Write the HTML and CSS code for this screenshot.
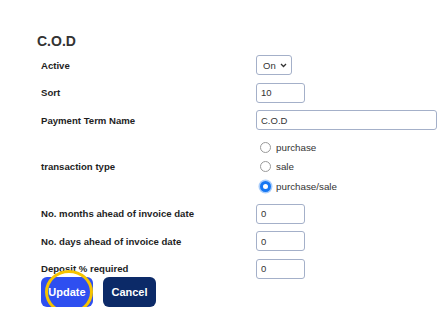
FILE: index.html
```html
<!DOCTYPE html>
<html>
<head>
  <title>C.O.D</title>
  <meta charset="UTF-8">
  <meta name="viewport" content="width=device-width, initial-scale=1.0">
  <link rel="stylesheet" href="styles.css">
</head>
<body>
  <div class="page">
    <h1>C.O.D</h1>
    <form class="term-form">
      <label class="field-label" for="active">Active</label>
      <div class="select-wrap">
        <select id="active" name="active">
          <option>On</option>
          <option>Off</option>
        </select>
        <svg class="chevron" width="7" height="5" viewBox="0 0 7 5"><path d="M1 1l2.5 2.5L6 1" fill="none" stroke="#333" stroke-width="1.3"/></svg>
      </div>

      <label class="field-label" for="sort">Sort</label>
      <div><input class="small" type="text" id="sort" value="10"></div>

      <label class="field-label" for="name">Payment Term Name</label>
      <div><input class="wide" type="text" id="name" value="C.O.D"></div>

      <span class="field-label">transaction type</span>
      <div class="radio-group">
        <label class="radio"><input type="radio" name="ttype"> purchase</label>
        <label class="radio"><input type="radio" name="ttype"> sale</label>
        <label class="radio"><input type="radio" name="ttype" checked> purchase/sale</label>
      </div>

      <label class="field-label" for="months">No. months ahead of invoice date</label>
      <div><input class="small" type="text" id="months" value="0"></div>

      <label class="field-label" for="days">No. days ahead of invoice date</label>
      <div><input class="small" type="text" id="days" value="0"></div>

      <label class="field-label" for="deposit">Deposit % required</label>
      <div><input class="small" type="text" id="deposit" value="0"></div>
    </form>
    <div class="actions">
      <div class="btn-wrap">
        <button class="btn btn-update" type="button">Update</button>
        <span class="focus-ring"></span>
      </div>
      <button class="btn btn-cancel" type="button">Cancel</button>
    </div>
  </div>
</body>
</html>
```

FILE: styles.css
```css
html, body {
  margin: 0;
  background: #fff;
}
body {
  font-family: "Liberation Sans", Arial, sans-serif;
  color: #222;
}
.page {
  padding: 33px 0 0 37px;
}
h1 {
  margin: 0;
  font-size: 14px;
  line-height: 17px;
  font-weight: bold;
  color: #333;
}
.term-form {
  display: grid;
  grid-template-columns: 215px 190px;
  row-gap: 7.5px;
  align-items: center;
  margin-top: 5px;
  padding-left: 4px;
}
.field-label {
  font-size: 9.6px;
  font-weight: bold;
  color: #1e1e1e;
}
input[type=text],
select {
  box-sizing: border-box;
  height: 20px;
  border: 1px solid #a4b0c9;
  border-radius: 3px;
  font-family: inherit;
  font-size: 9.5px;
  color: #333;
  padding: 0 4px;
  background: #fff;
  display: block;
}
input.small {
  width: 49px;
}
input.wide {
  width: 181px;
}
.select-wrap {
  position: relative;
  width: 36px;
}
select {
  -webkit-appearance: none;
  appearance: none;
  width: 36px;
  padding-left: 6px;
}
.chevron {
  position: absolute;
  right: 5px;
  top: 8px;
  pointer-events: none;
}
.radio-group {
  display: flex;
  flex-direction: column;
  padding-left: 4px;
}
.radio {
  display: flex;
  align-items: center;
  height: 19.5px;
  font-size: 9.8px;
  color: #333;
}
.radio input {
  -webkit-appearance: none;
  appearance: none;
  box-sizing: border-box;
  width: 11px;
  height: 11px;
  margin: 0 5px 0 0;
  border: 1px solid #9a9a9a;
  border-radius: 50%;
  background: #fff;
}
.radio input:checked {
  border: 3px solid #1677f3;
  background: #fff;
  box-shadow: 0 0 0 1.5px #a9cdfb;
}
.actions {
  display: flex;
  gap: 10px;
  margin-top: -2px;
  padding-left: 4px;
}
.btn-wrap {
  position: relative;
}
.btn {
  height: 30px;
  border: none;
  border-radius: 6px;
  color: #fff;
  font-family: inherit;
  font-size: 11px;
  font-weight: bold;
  padding: 0;
  display: block;
}
.btn-update {
  width: 52px;
  background: #2e4ff0;
}
.btn-cancel {
  width: 53px;
  background: #0c2a68;
}
.focus-ring {
  position: absolute;
  left: 4px;
  top: -7px;
  width: 48px;
  height: 44px;
  box-sizing: border-box;
  border: 3px solid #f6c400;
  border-radius: 50%;
}
```
